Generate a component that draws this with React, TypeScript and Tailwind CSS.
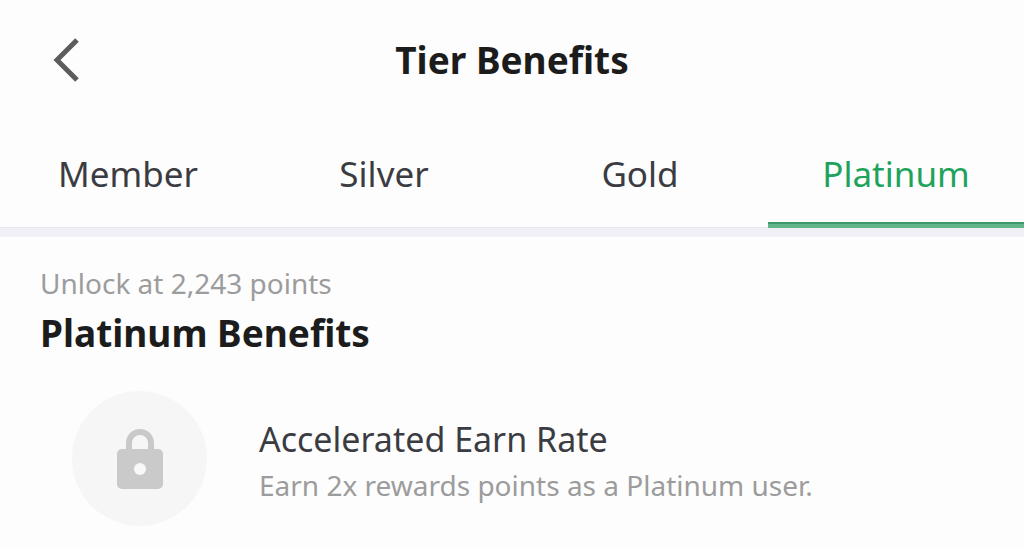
import { useState } from 'react';
import clsx from 'clsx';

const tiers = ['Member', 'Silver', 'Gold', 'Platinum'];

function LockIcon() {
  return (
    <svg viewBox="0 0 48 60" className="w-12 h-15" aria-hidden="true">
      <path d="M13 24V14a11 11 0 0 1 22 0v10" fill="none" stroke="#c9c9c9" strokeWidth="6" />
      <rect x="1" y="20" width="46" height="40" rx="5" fill="#cacaca" />
      <circle cx="24" cy="40" r="6" fill="#f8f8f8" />
    </svg>
  );
}

export default function App() {
  const [active, setActive] = useState('Platinum');

  return (
    <div className="min-h-screen bg-[#fdfdfd] font-['Noto_Sans',sans-serif]">
      <header className="relative flex items-center justify-center h-30">
        <button type="button" aria-label="Back" className="absolute left-12 p-1">
          <svg viewBox="0 0 32 44" className="w-8 h-11" fill="none" stroke="#5c5c5c" strokeWidth="5">
            <path d="M25 2 5 22l20 20" />
          </svg>
        </button>
        <h1 className="text-[37px] leading-12 font-bold text-[#1c1c1c]">Tier Benefits</h1>
      </header>

      <div role="tablist" className="grid grid-cols-4 h-27 border-b border-[#e6e8ef]">
        {tiers.map((tier) => (
          <button
            key={tier}
            type="button"
            role="tab"
            aria-selected={tier === active}
            onClick={() => setActive(tier)}
            className={clsx(
              'relative text-[35px] leading-12 text-center',
              tier === active ? 'text-[#1fa35c]' : 'text-[#3b3c42]'
            )}
          >
            {tier}
            {tier === active && (
              <span className="absolute inset-x-0 -bottom-px h-[6px] bg-[#62b58a] border-t-2 border-[#3c9868]" />
            )}
          </button>
        ))}
      </div>
      <div className="h-[9px] bg-[#f0f0f6]" />

      <main className="px-10 pt-6">
        <p className="text-[28px] leading-11 text-[#9c9c9c]">Unlock at 2,243 points</p>
        <h2 className="text-[37px] leading-14 font-bold text-[#1c1c1c]">Platinum Benefits</h2>

        <ul className="pt-[30px]">
          <li className="flex items-center gap-13 pl-8">
            <div className="flex items-center justify-center size-[135px] shrink-0 rounded-full bg-[#f6f6f6]">
              <LockIcon />
            </div>
            <div className="pt-1">
              <h3 className="text-[34px] leading-12 text-[#3b3c42]">Accelerated Earn Rate</h3>
              <p className="text-[28px] leading-11 text-[#9c9c9c]">Earn 2x rewards points as a Platinum user.</p>
            </div>
          </li>
        </ul>
      </main>
    </div>
  );
}
